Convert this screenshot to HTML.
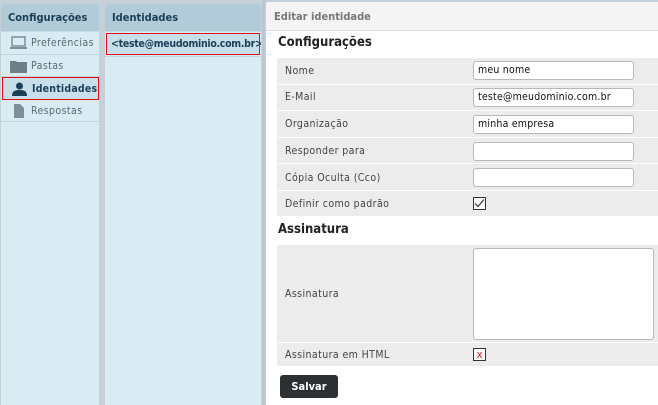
<!DOCTYPE html>
<html><head><meta charset="utf-8"><style>
*{box-sizing:border-box;margin:0;padding:0}
body{width:658px;height:405px;overflow:hidden;background:#c5d0d8;font-family:"DejaVu Sans Condensed","DejaVu Sans","Liberation Sans",sans-serif;font-size:10.5px;color:#333;position:relative}
.p{position:absolute;background:#d9ebf3;border-radius:4px 4px 0 0;overflow:hidden}
.h{height:28px;background:#b1ccd8;color:#1c3e55;font-weight:bold;font-size:11px;line-height:27px;padding-left:7px;border-bottom:1px solid #c8dbe3}
.it{height:22.5px;border-bottom:1px solid #c3d6df;line-height:23px;padding-left:30px;color:#5a6a72;position:relative;letter-spacing:0.4px;white-space:nowrap}
.ic{position:absolute;left:9px;top:4px;width:17px;height:14px}
.r{position:absolute;left:277px;width:381px;background:#ececec;border-bottom:1px solid #fff}
.r span{position:absolute;left:8px;color:#444;letter-spacing:0.4px}
.in{position:absolute;left:196px;width:161px;height:19px;background:#fff;border:1px solid #b8b8b8;border-radius:3px;font-size:10.5px;line-height:17px;padding-left:4px;color:#111;letter-spacing:0.2px}
</style></head><body>
<div class="p" style="left:1px;top:4px;width:98px;height:401px">
<div class="h">Configurações</div>
<div class="it"><svg class="ic" viewBox="0 0 17 14"><rect x="2" y="1" width="13" height="9" fill="none" stroke="#7f8f98" stroke-width="1.5"/><rect x="0" y="11" width="17" height="2" fill="#7f8f98"/></svg>Preferências</div>
<div class="it"><svg class="ic" viewBox="0 0 17 14"><path d="M0 2h6l1 1h10v11H0z" fill="#6f7f88"/></svg>Pastas</div>
<div class="it" style="color:#1c3e55;font-weight:bold;background:#c6dfea;border:1px solid #e01010;margin:0 0 0 1px;width:97px;padding-left:29px;letter-spacing:0.2px"><svg class="ic" style="left:8px" viewBox="0 0 17 14"><circle cx="8.5" cy="4" r="3.5" fill="#1c3e55"/><path d="M1 14c0-5 3-6 7.5-6s7.5 1 7.5 6z" fill="#1c3e55"/></svg>Identidades</div>
<div class="it"><svg class="ic" viewBox="0 0 17 14"><path d="M4 0h6l4 4v10H4z" fill="#7f8f98"/></svg>Respostas</div>
</div>
<div class="p" style="left:105px;top:4px;width:156px;height:401px">
<div class="h">Identidades</div>
<div style="margin:1px 0 0 1px;width:154px;height:22px;border:1px solid #e01010;background:#c6dfea;color:#1c3e55;font-weight:bold;line-height:20px;padding-left:4px;white-space:nowrap;letter-spacing:-0.3px">&lt;teste@meudominio.com.br&gt;</div>
<div style="height:1px;background:#c3d6df;margin-top:1px"></div>
</div>
<div style="position:absolute;left:262px;top:0;width:3px;height:405px;background:#bcc6ce"></div>
<div style="position:absolute;left:266px;top:2px;width:392px;height:403px;background:#fff;border-radius:4px 0 0 0">
<div style="height:29px;background:#f4f4f4;border-bottom:1px solid #ddd;line-height:29px;padding-left:8px;color:#777;font-weight:bold;font-size:11px">Editar identidade</div>
</div>
<div style="position:absolute;left:278px;top:35px;font-weight:bold;font-size:13px;color:#222">Configurações</div>
<div class="r" style="top:58px;height:27px"><span style="top:7px">Nome</span><div class="in" style="top:3px">meu nome</div></div>
<div class="r" style="top:85px;height:26px"><span style="top:6px">E-Mail</span><div class="in" style="top:3px">teste@meudominio.com.br</div></div>
<div class="r" style="top:111px;height:27px"><span style="top:7px">Organização</span><div class="in" style="top:4px">minha empresa</div></div>
<div class="r" style="top:138px;height:26px"><span style="top:7px">Responder para</span><div class="in" style="top:4px"></div></div>
<div class="r" style="top:164px;height:27px"><span style="top:8px">Cópia Oculta (Cco)</span><div class="in" style="top:4px"></div></div>
<div class="r" style="top:191px;height:26px"><span style="top:7px">Definir como padrão</span><div style="position:absolute;left:196px;top:6px;width:13px;height:13px;border:1px solid #333;background:#fff"><svg width="11" height="11" viewBox="0 0 11 11"><path d="M1 5.5l3 3 6-7" fill="none" stroke="#333" stroke-width="1.2"/></svg></div></div>
<div style="position:absolute;left:278px;top:222px;font-weight:bold;font-size:13px;color:#222">Assinatura</div>
<div class="r" style="top:245px;height:98px"><span style="top:43px">Assinatura</span><div class="in" style="top:3px;height:92px;width:181px"></div></div>
<div class="r" style="top:343px;height:24px"><span style="top:6px">Assinatura em HTML</span><div style="position:absolute;left:196px;top:5px;width:13px;height:13px;border:1px solid #333;background:#fff;color:#e01010;font-size:11px;line-height:11px;text-align:center">x</div></div>
<div style="position:absolute;left:280px;top:375px;width:58px;height:23px;background:#2c3033;border-radius:3px;color:#fff;font-weight:bold;font-size:11px;line-height:23px;text-align:center">Salvar</div>
</body></html>
